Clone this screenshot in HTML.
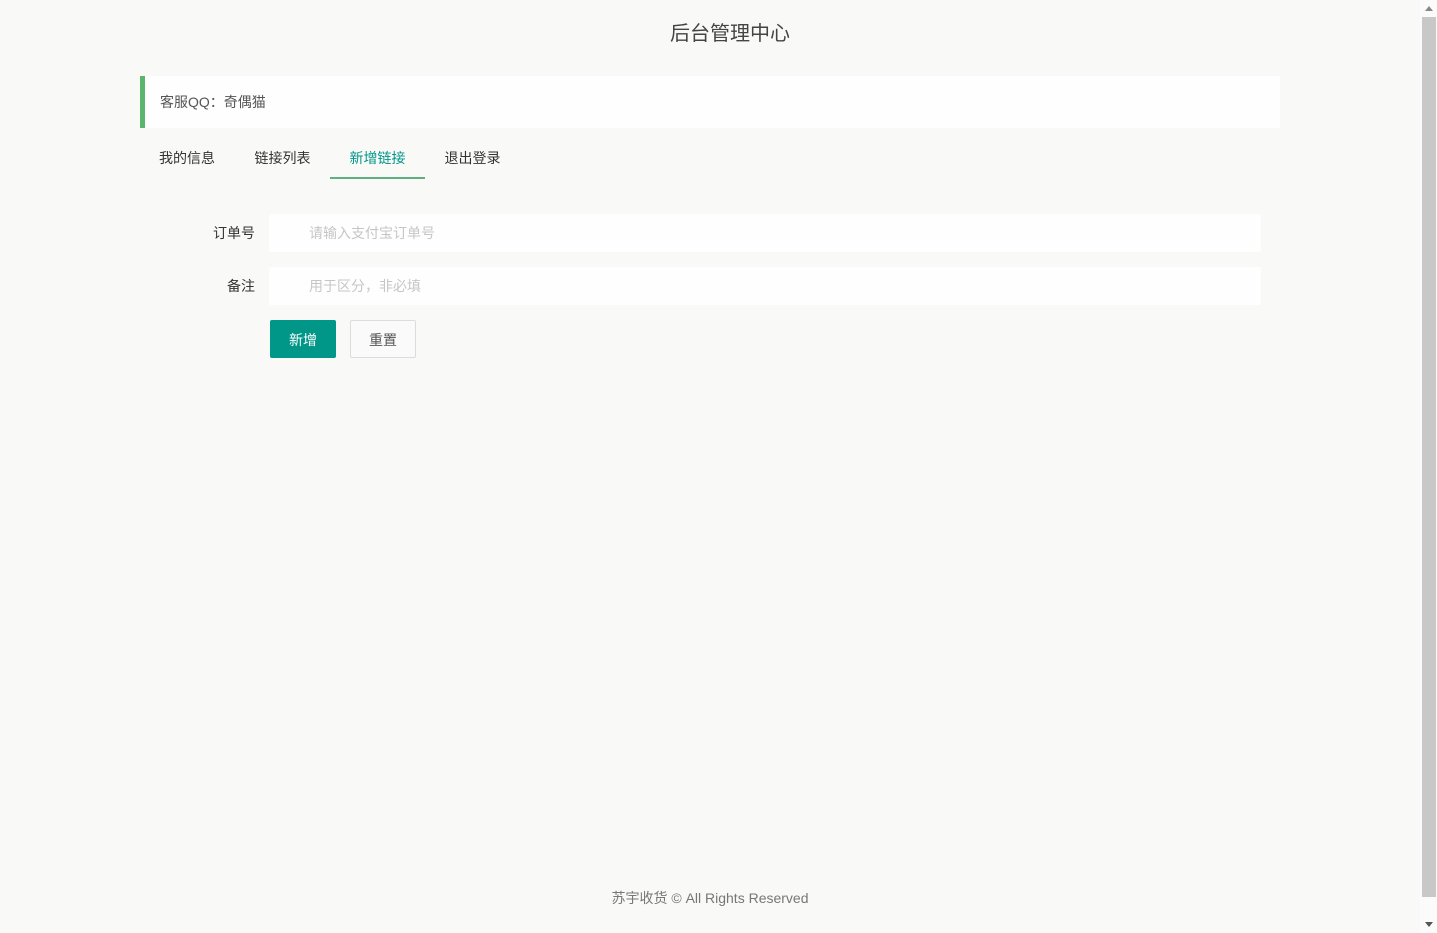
<!DOCTYPE html>
<html lang="zh-CN">
<head>
<meta charset="utf-8">
<title>后台管理中心</title>
<style>
html,body{margin:0;padding:0;width:1437px;height:933px;overflow:hidden;background:#f9f9f8;}
body{position:relative;font-family:"Liberation Sans","Noto Sans CJK SC",sans-serif;color:#333;font-size:14px;}
.a{position:absolute;white-space:nowrap;}
.title{left:0;top:19px;width:1460px;text-align:center;font-size:20px;line-height:30px;color:#444;}
.quote{left:140px;top:76px;width:1135px;height:52px;background:#fefefe;border-left:5px solid #5cb56c;border-radius:0 2px 2px 0;}
.quote span{position:absolute;left:15px;top:15px;line-height:22px;color:#555;font-size:14px;}
.tab{top:148px;height:20px;line-height:20px;font-size:14px;color:#333;}
.line{left:330px;top:177px;width:95px;height:2px;background:#5fb080;}
.label{width:115px;left:140px;text-align:right;font-size:14px;line-height:20px;color:#333;}
.input{left:269px;width:992px;height:38px;background:#fefefe;border-radius:2px;}
.ph{left:309px;font-size:14px;line-height:20px;color:#c6c6c6;}
.btn1{left:270px;top:320px;width:66px;height:38px;line-height:40px;text-align:center;background:#009688;color:#fff;border-radius:2px;font-size:14px;}
.btn2{left:350px;top:320px;width:64px;height:36px;line-height:38px;text-align:center;background:#fafafa;color:#555;border:1px solid #dcdcdc;border-radius:2px;font-size:14px;}
.foot{left:0;top:888px;width:1420px;text-align:center;font-size:14px;line-height:20px;color:#777;}
.sb{left:1420px;top:0;width:17px;height:933px;background:#fbfbfb;}
.thumb{left:1422px;top:17px;width:14px;height:880px;background:#c8c8c8;}
.up{left:1425px;top:6px;width:0;height:0;border-left:4px solid transparent;border-right:4px solid transparent;border-bottom:5px solid #888;}
.down{left:1425px;top:922px;width:0;height:0;border-left:4px solid transparent;border-right:4px solid transparent;border-top:5px solid #555;}
</style>
</head>
<body>
<div class="a title">后台管理中心</div>
<div class="a quote"><span>客服QQ：奇偶猫</span></div>
<div class="a tab" style="left:159px">我的信息</div>
<div class="a tab" style="left:254.5px">链接列表</div>
<div class="a tab" style="left:349.5px;color:#009688">新增链接</div>
<div class="a tab" style="left:444.5px">退出登录</div>
<div class="a line"></div>
<div class="a label" style="top:223px">订单号</div>
<div class="a input" style="top:214px"></div>
<div class="a ph" style="top:223px">请输入支付宝订单号</div>
<div class="a label" style="top:276px">备注</div>
<div class="a input" style="top:267px"></div>
<div class="a ph" style="top:276px">用于区分，非必填</div>
<div class="a btn1">新增</div>
<div class="a btn2">重置</div>
<div class="a foot">苏宇收货 © All Rights Reserved</div>
<div class="a sb"></div>
<div class="a thumb"></div>
<div class="a up"></div>
<div class="a down"></div>
</body>
</html>
